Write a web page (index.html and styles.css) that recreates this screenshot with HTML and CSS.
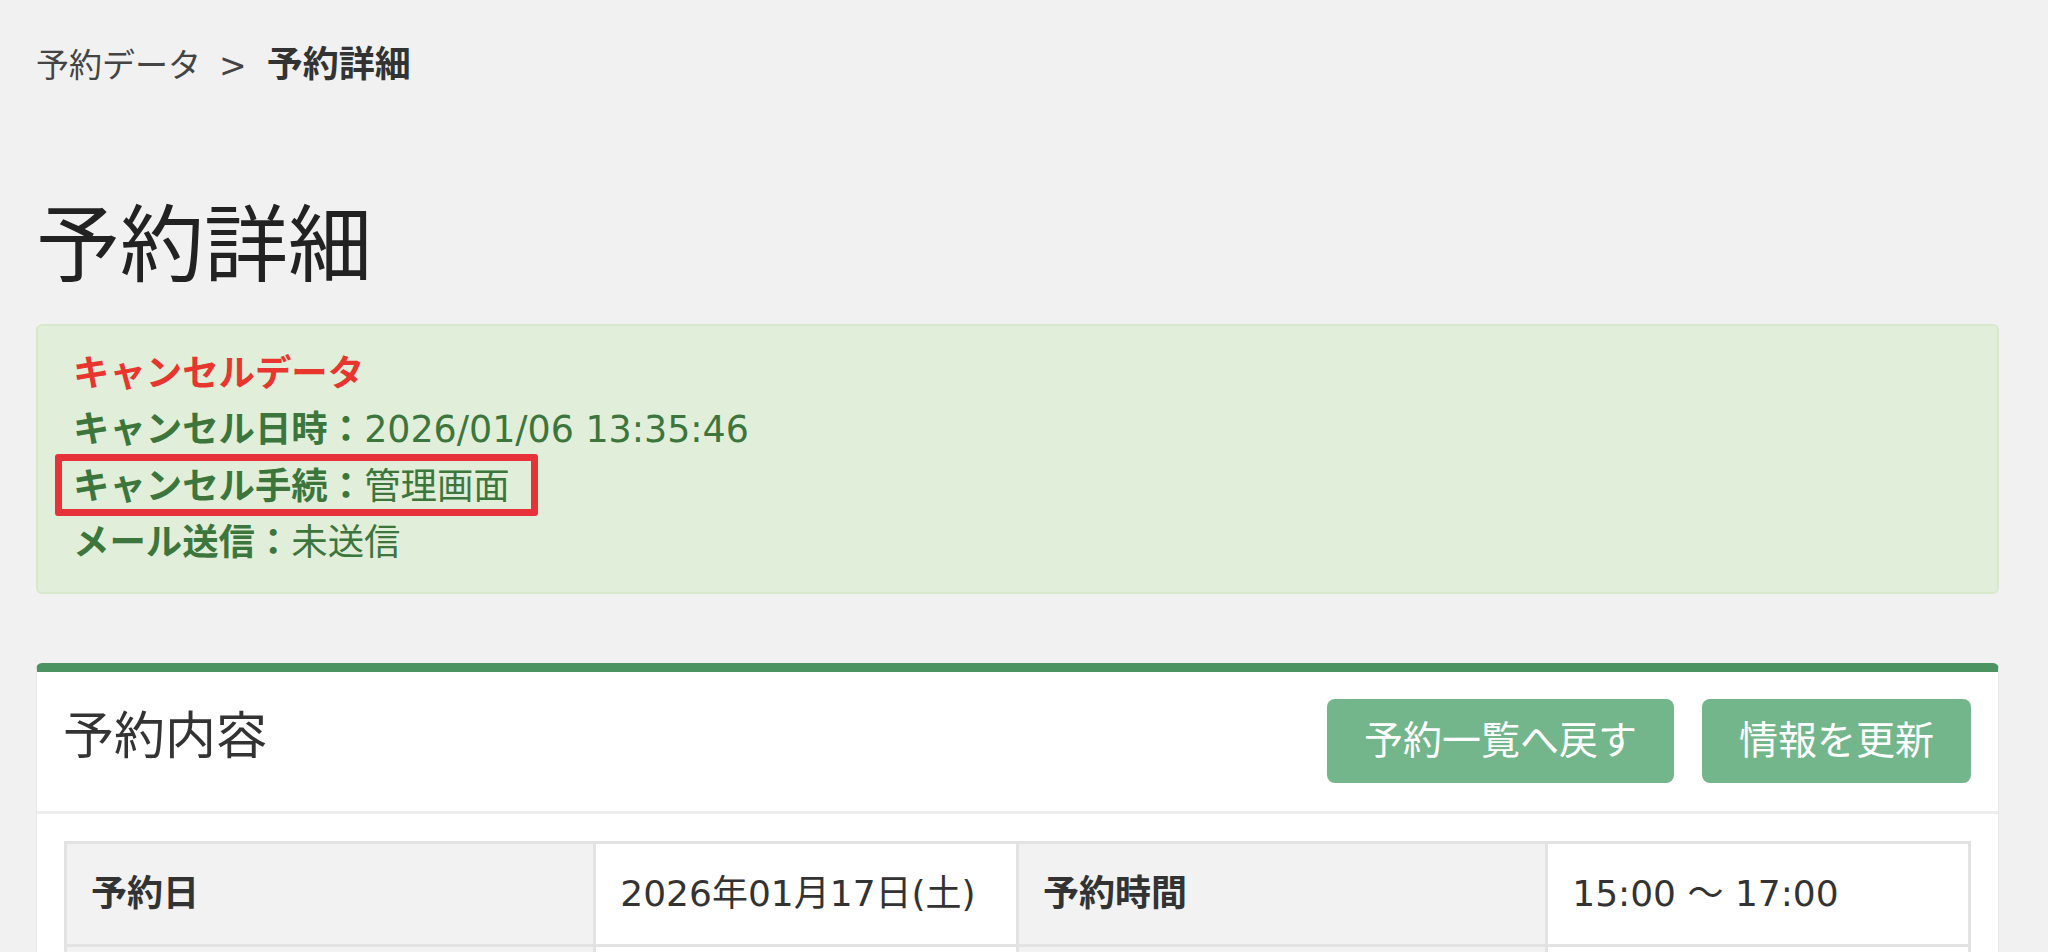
FILE: index.html
```html
<!DOCTYPE html>
<html lang="ja">

<head>
    <meta charset="UTF-8">
    <meta name="viewport" content="width=device-width, initial-scale=1.0">
    <title>予約詳細</title>
    <link rel="stylesheet" href="styles.css">
</head>

<body>
    <div class="page">
        <!-- パンくず -->
        <div class="crumb">
            <span>予約データ</span><span class="sep">&gt;</span><span class="now">予約詳細</span>
        </div>

        <h1 class="title">予約詳細</h1>

        <!-- キャンセル情報 -->
        <div class="alert">
            <div class="alert-head">キャンセルデータ</div>
            <div class="alert-row"><b>キャンセル日時：</b>2026/01/06 13:35:46</div>
            <div class="alert-row marked"><b>キャンセル手続：</b>管理画面<span class="mark"></span></div>
            <div class="alert-row"><b>メール送信：</b>未送信</div>
        </div>

        <!-- 予約内容 -->
        <div class="box">
            <div class="box-head">
                <h2 class="box-title">予約内容</h2>
                <div class="btns">
                    <a href="#" class="btn">予約一覧へ戻す</a>
                    <a href="#" class="btn">情報を更新</a>
                </div>
            </div>
            <div class="box-body">
                <table class="info">
                    <tr>
                        <th>予約日</th>
                        <td>2026年01月17日(土)</td>
                        <th>予約時間</th>
                        <td>15:00 ～ 17:00</td>
                    </tr>
                    <tr>
                        <th>&nbsp;</th>
                        <td>&nbsp;</td>
                        <th>&nbsp;</th>
                        <td>&nbsp;</td>
                    </tr>
                </table>
            </div>
        </div>
    </div>
</body>

</html>
```

FILE: styles.css
```css
* {
    margin: 0;
    padding: 0;
    box-sizing: border-box;
}

body {
    background-color: #f1f1f1;
    font-family: "DejaVu Sans", "Noto Sans CJK JP", sans-serif;
    color: #333;
}

.page {
    padding: 40px 49px 0 36px;
}

/* パンくず */
.crumb {
    font-size: 33px;
    line-height: 50px;
    color: #444;
}

.crumb .sep {
    padding: 0 20px 0 18px;
}

.crumb .now {
    font-size: 36px;
    font-weight: bold;
    color: #333;
}

.title {
    margin-top: 105px;
    font-size: 84px;
    font-weight: normal;
    line-height: 100px;
    color: #222;
}

/* キャンセル情報 */
.alert {
    margin-top: 28px;
    padding: 20px 35px 21px;
    background-color: #e1eed9;
    border: 2px solid #d8e8cc;
    border-radius: 6px;
    font-size: 36.4px;
    line-height: 56.3px;
    color: #3c763d;
}

.alert-head {
    font-weight: bold;
    color: #e8362f;
}

.alert-row b {
    font-weight: bold;
}

.alert-row.marked {
    position: relative;
}

.mark {
    position: absolute;
    left: -18px;
    top: -5px;
    width: 483px;
    height: 62px;
    border: 7px solid #e8323a;
    border-radius: 3px;
}

/* 予約内容 */
.box {
    margin-top: 69px;
    background-color: #fff;
    border-top: 9px solid #4b9461;
    border-left: 1px solid #e8e8e8;
    border-right: 1px solid #e8e8e8;
    border-radius: 6px 6px 0 0;
}

.box-head {
    display: flex;
    align-items: center;
    justify-content: space-between;
    padding: 27px 27px 28px 26px;
    border-bottom: 3px solid #eeeeee;
}

.box-title {
    font-size: 51px;
    font-weight: normal;
    line-height: 70px;
    color: #333;
    margin-bottom: 8px;
}

.btns {
    display: flex;
    gap: 28px;
}

.btn {
    display: block;
    height: 84px;
    padding: 0 37px;
    background-color: #74b68b;
    border-radius: 8px;
    font-size: 39px;
    line-height: 84px;
    color: #fff;
    text-decoration: none;
}

.box-body {
    padding: 27px 27px 40px 27px;
}

.info {
    width: 100%;
    border-collapse: collapse;
    font-size: 36px;
    line-height: 56px;
    color: #333;
}

.info th,
.info td {
    border: 3px solid #e3e3e3;
    padding: 22px 24px;
    text-align: left;
}

.info th {
    width: 27.8%;
    background-color: #f2f2f2;
    font-weight: bold;
}

.info td {
    width: 22.2%;
    background-color: #fff;
}
```
